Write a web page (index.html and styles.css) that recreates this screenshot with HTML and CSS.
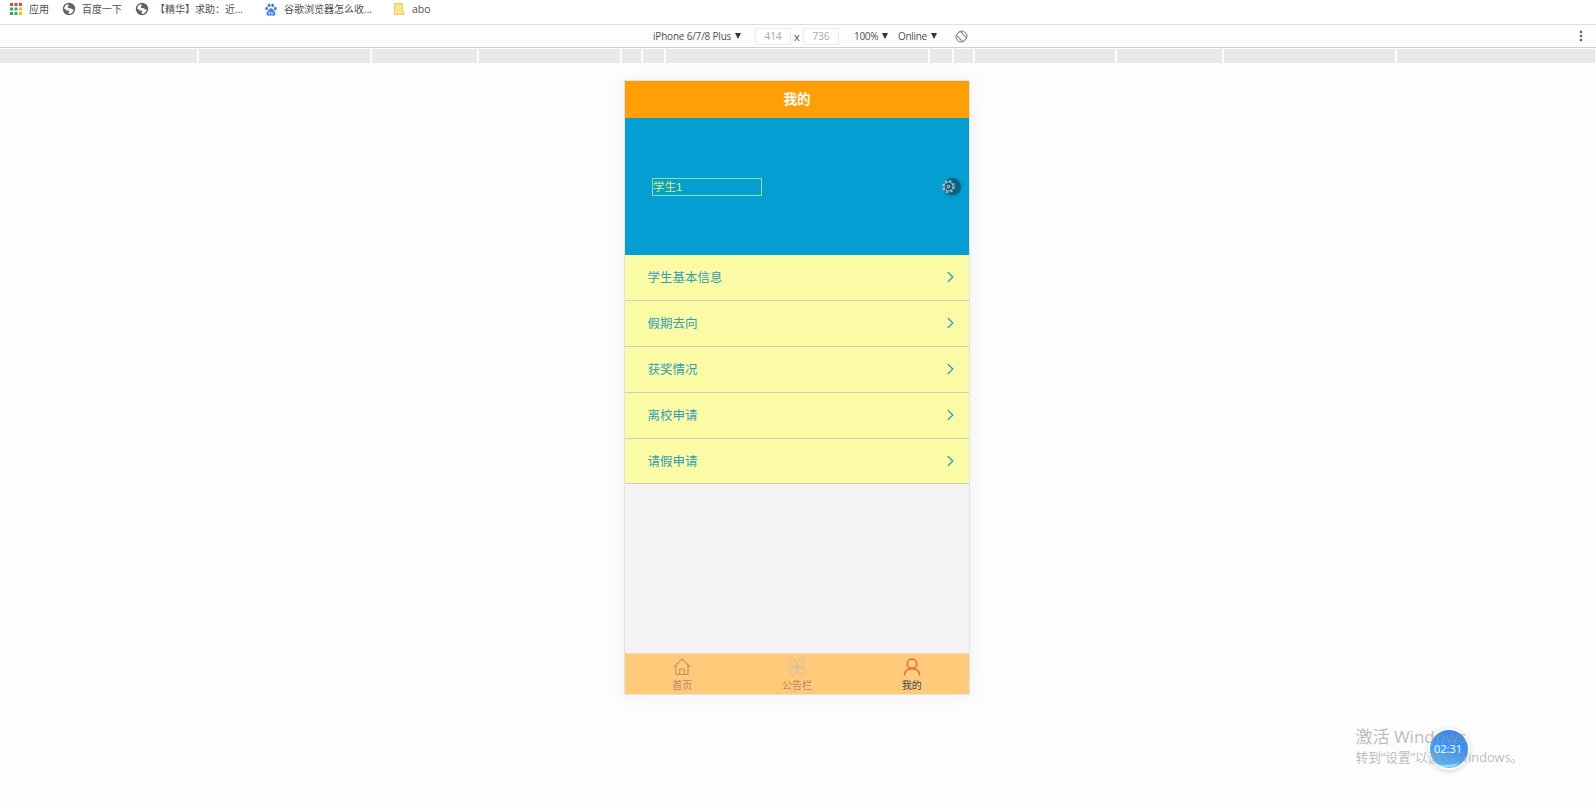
FILE: index.html
```html
<!DOCTYPE html>
<html lang="zh-CN">
<head>
<meta charset="utf-8">
<title>我的</title>
<link rel="stylesheet" href="styles.css">
</head>
<body>
<svg class="defs" width="0" height="0">
  <symbol id="globe" viewBox="0 0 14 14"><circle cx="7" cy="7" r="6.200" fill="#5f6368"/><path d="M2.300 7C2 4.300 3.700 2.600 6.300 2.200L6.600 3.600 5.500 5 6.800 6.200H9L10 7.600H11.700C11.500 9.700 9.800 11.500 7.700 11.900L6.300 11.200 7.200 9.800 6.700 8.500H4.200L3.600 7z" fill="#fff"/></symbol>
  <symbol id="chev" viewBox="0 0 7 12"><path d="M.8 1l5 5-5 5" fill="none" stroke="#2f9fc0" stroke-width="1.300"/></symbol>
</svg>
<nav class="bookmarks">
  <span class="bm apps"><svg width="12" height="12" viewBox="0 0 12 12"><path fill="#ea4335" d="M0 0h3v3H0zM4.500 0h3v3h-3zM9 0h3v3H9z"/><path fill="#34a853" d="M0 4.500h3v3H0zM0 9h3v3H0zM4.500 9h3v3h-3z"/><path fill="#4285f4" d="M4.500 4.500h3v3h-3z"/><path fill="#fbbc05" d="M9 4.500h3v3H9zM9 9h3v3H9z"/></svg>应用</span>
  <span class="bm baidu"><svg width="14" height="14"><use href="#globe"/></svg>百度一下</span>
  <span class="bm help"><svg width="14" height="14"><use href="#globe"/></svg>【精华】求助：近...</span>
  <span class="bm paw"><svg width="12" height="13" viewBox="0 0 12 13" fill="#3b82ec"><ellipse cx="1.700" cy="5.500" rx="1.400" ry="1.800"/><ellipse cx="4.100" cy="2.300" rx="1.400" ry="1.900"/><ellipse cx="7.700" cy="2.300" rx="1.400" ry="1.900"/><ellipse cx="10.300" cy="5.500" rx="1.400" ry="1.800"/><path d="M6 5.300c1.700 0 2 1.700 3.400 2.900 2 1.900 1 4.500-1 4.500-1 0-1.400-.2-2.400-.2s-1.400.2-2.400.2c-2 0-3-2.600-1-4.500C4 7 4.300 5.300 6 5.300z"/><path d="M4.900 8.500v2.500H3.800V9.700h1M6.500 9v2h1.600V9" fill="none" stroke="#fff" stroke-width=".6"/></svg>谷歌浏览器怎么收...</span>
  <span class="bm folder"><svg width="11" height="12" viewBox="0 0 11 12"><path d="M.5.500h8v8.500h1.500v2.500H.5z" fill="#fbe58c" stroke="#ecce63"/></svg>abo</span>
</nav>
<div class="devicebar">
  <span class="device">iPhone 6/7/8 Plus<i></i></span>
  <span class="size">414</span><span class="times">x</span><span class="size">736</span>
  <span class="scale">100%<i></i></span>
  <span class="net">Online<i></i></span>
  <svg class="rotate" width="13" height="13" viewBox="0 0 13 13" fill="none" stroke="#777"><rect x="3.800" y="1.700" width="5.400" height="9.600" rx=".7" transform="rotate(-45 6.500 6.500)"/><path d="M5.500 1A5.600 5.600 0 0 1 12 7.500M7.500 12A5.600 5.600 0 0 1 1 5.500"/></svg>
  <svg class="dots" width="4" height="12" viewBox="0 0 4 12" fill="#666"><circle cx="2" cy="1.900" r="1.300"/><circle cx="2" cy="6" r="1.300"/><circle cx="2" cy="10.100" r="1.300"/></svg>
</div>
<div class="ruler"><b style="width:197px"></b><b style="width:171px"></b><b style="width:105px"></b><b style="width:141px"></b><b style="width:19px"></b><b style="width:21px"></b><b style="width:262px"></b><b style="width:22px"></b><b style="width:19px"></b><b style="width:140px"></b><b style="width:105px"></b><b style="width:171px"></b><b style="width:198px"></b></div>
<main class="phone">
  <header class="title">我的</header>
  <section class="profile">
    <div class="name">学生1</div>
    <div class="gear"><svg width="15" height="15" viewBox="0 0 15 15" fill="none" stroke="#b4bec2"><circle cx="7.500" cy="7.500" r="4.500" stroke-width="1.100"/><circle cx="7.500" cy="7.500" r="5.700" stroke-width="1.500" stroke-dasharray="2.200 2.277"/><circle cx="7.500" cy="7.500" r="1.300" stroke-width="1.100"/></svg></div>
  </section>
  <ul class="list">
    <li>学生基本信息<svg width="7" height="12"><use href="#chev"/></svg></li>
    <li>假期去向<svg width="7" height="12"><use href="#chev"/></svg></li>
    <li>获奖情况<svg width="7" height="12"><use href="#chev"/></svg></li>
    <li>离校申请<svg width="7" height="12"><use href="#chev"/></svg></li>
    <li>请假申请<svg width="7" height="12"><use href="#chev"/></svg></li>
  </ul>
  <footer class="tabs">
    <div class="tab"><svg width="18" height="18" viewBox="0 0 18 18" fill="none" stroke="#bd9562" stroke-width="1.100"><path d="M.8 9L9 1.200 17.200 9M3 7.500v9h12v-9M6.700 16.500v-5.500h4.600v5.500"/></svg>首页</div>
    <div class="tab"><svg width="18" height="18" viewBox="0 0 18 18" fill="none" stroke="#d8c2a0" stroke-width="1.200"><path d="M8.300 8.300H4.800a3.600 3.600 0 1 1 3.500-3.500zM9.700 8.300V4.800a3.600 3.600 0 1 1 3.500 3.500zM8.300 9.700v3.500a3.600 3.600 0 1 1-3.500-3.500zM9.700 9.700h3.500a3.600 3.600 0 1 1-3.500 3.500z"/></svg>公告栏</div>
    <div class="tab active"><svg width="18" height="18" viewBox="0 0 18 18" fill="none" stroke="#ed6332" stroke-width="1.300"><circle cx="9" cy="5.700" r="4.700"/><path d="M1.200 17.500C1.700 13.200 4.700 10.500 9 10.500s7.300 2.700 7.800 7"/></svg>我的</div>
  </footer>
</main>
<div class="clock"><svg class="ball" width="38" height="38" viewBox="0 0 38 38"><defs><linearGradient id="g" x1=".7" y1="0" x2=".3" y2="1"><stop offset="0" stop-color="#3a84ec"/><stop offset=".5" stop-color="#3e98f2"/><stop offset="1" stop-color="#5bbcf8"/></linearGradient></defs><circle cx="19" cy="19" r="19" fill="url(#g)"/><path d="M9 35Q20 35.500 30 33 21 40 9 35.500z" fill="#8fe0ff"/></svg></div>
<aside class="watermark"><div class="wm1">激活 Windows</div><div class="wm2">转到“设置”以激活 Windows。</div></aside>
<div class="time">02:31</div>
</body>
</html>
```
FILE: styles.css
```css
* { box-sizing: border-box; }
body { margin: 0; width: 1596px; height: 804px; overflow: hidden; position: relative; background: #fdfdfd; color: #505050; font-family: "Open Sans", "Noto Sans CJK SC", sans-serif; font-size: 10px; }
.defs { position: absolute; }
svg { display: block; flex: none; }
.bookmarks { display: flex; height: 25px; padding: 0 0 6px 10px; background: #fff; border-bottom: 1px solid #dfdfdf; white-space: nowrap; }
.bm { display: flex; align-items: center; gap: 7px; line-height: 18px; }
.apps { width: 52px; }
.baidu { width: 73px; gap: 6px; }
.help { width: 130px; gap: 6px; }
.paw { width: 129px; }
.folder { gap: 7px; font-size: 10.500px; }
.devicebar { display: flex; align-items: center; height: 23px; padding-left: 653px; border-bottom: 1px solid #cfcfcf; white-space: nowrap; background: #fdfdfd; }
.devicebar i { display: inline-block; margin-left: 4px; border: 3px solid transparent; border-top: 6px solid #333; border-bottom: 0; vertical-align: 1px; }
.device { width: 102px; letter-spacing: -.2px; }
.size { width: 36px; height: 17px; border: 1px solid #ececec; color: #aaa; text-align: center; line-height: 15px; background: #fff; }
.times { width: 12px; text-align: center; font-size: 11px; padding-top: 1px; }
.scale { width: 44px; margin-left: 15px; letter-spacing: -.3px; }
.net { width: 57px; letter-spacing: -.3px; }
.dots { margin-left: auto; margin-right: 13px; }
.ruler { display: flex; gap: 2px; height: 15px; padding-top: 1px; }
.ruler b { flex: none; background: #e9e9e9; height: 14px; }
.phone { display: flex; flex-direction: column; width: 346px; height: 615px; margin: 17px 0 0 624px; border: 1px solid #e2e2e0; background: #f4f4f4; box-shadow: 0 1px 20px rgba(0,0,0,.06); }
.title { height: 37px; background: #ff9e05; color: #fff; font-size: 13.500px; font-weight: 700; line-height: 36px; text-align: center; }
.profile { display: flex; align-items: center; justify-content: space-between; height: 137px; padding: 0 8px 0 27px; background: #049ed3; }
.name { width: 110px; height: 18px; border: 1px solid #8ee58f; color: #d8f56a; font: 11.500px/16px "Liberation Sans", "Noto Sans CJK SC", sans-serif; display: flex; align-items: center; }
.gear { width: 17px; height: 17px; border-radius: 50%; background: #086581; box-shadow: 0 1px 3px rgba(0,50,70,.4); }
.gear svg { margin: 1px 0 0 -3px; }
.list { margin: 0; padding: 0; list-style: none; }
.list li { display: flex; align-items: center; justify-content: space-between; height: 45.900px; padding: 0 15px 2px 22.500px; border-bottom: 1px solid #cdcfbb; background: #fbfba6; color: #31a0b4; font-size: 12.500px; }
.list svg { margin-top: 1px; }
.tabs { display: flex; height: 41px; margin-top: auto; background: #ffca79; border-top: 1px solid #f4d8aa; }
.tab { flex: 1; display: flex; flex-direction: column; align-items: center; padding-top: 4px; color: #b98867; line-height: 18px; }
.active { color: #444855; }
.clock { position: absolute; left: 1428px; top: 728px; width: 42px; height: 42px; padding: 2px; border-radius: 50%; background: #fff; box-shadow: 0 1px 5px rgba(0,0,0,.18); }
.watermark { position: absolute; left: 1355.500px; top: 725px; color: rgba(150,150,150,.65); white-space: nowrap; }
.wm1 { font-size: 17px; line-height: 24px; }
.wm2 { font-size: 12.700px; line-height: 16px; }
.time { position: absolute; left: 1428px; top: 741px; width: 40px; color: #fff; font-size: 11px; line-height: 16px; text-align: center; }
```
